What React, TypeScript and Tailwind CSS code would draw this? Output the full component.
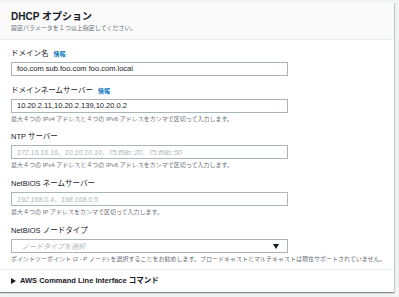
import type { JSX } from "react";

const font = "font-['Liberation_Sans','Noto_Sans_CJK_JP',sans-serif]";

function Label({ text, info }: { text: string; info?: boolean }): JSX.Element {
  return (
    <div className="flex items-center h-[10px] gap-[5px]">
      <span className="text-[7.5px] leading-[10px] text-[#16191f]">{text}</span>
      {info && (
        <span className="text-[6px] leading-[10px] font-bold text-[#0073bb]">情報</span>
      )}
    </div>
  );
}

function Input({ value, placeholder }: { value?: string; placeholder?: string }): JSX.Element {
  return (
    <div className="mt-[3px] w-[277px] h-[14px] border border-[#aab7b8] bg-white flex items-center px-[5px]">
      {value ? (
        <span className="text-[7.5px] leading-none text-[#16191f]">{value}</span>
      ) : (
        <span className="text-[7px] leading-none italic text-[#aab7b8]">{placeholder}</span>
      )}
    </div>
  );
}

function Help({ text }: { text: string }): JSX.Element {
  return <p className="mt-[2px] text-[6px] leading-[9px] text-[#687078] whitespace-nowrap">{text}</p>;
}

export default function App(): JSX.Element {
  return (
    <div className={`${font} w-[399px] h-[297px] bg-[#f2f3f3] pt-[2px] overflow-hidden`}>
      <div className="w-[394px] h-[290px] bg-white shadow-[0_1px_1px_0_rgba(0,28,36,0.3),1px_1px_1px_0_rgba(0,28,36,0.15),-1px_1px_1px_0_rgba(0,28,36,0.15)] flex flex-col">
        <div className="h-[38px] bg-[#fafafa] border-b border-[#eaeded] px-[11px] pt-[8px]">
          <h2 className="text-[10px] leading-[13px] font-bold text-[#16191f]">DHCP オプション</h2>
          <p className="text-[6px] leading-[9px] text-[#687078] mt-[1px]">設定パラメータを１つ以上指定してください。</p>
        </div>
        <div className="px-[11px] pt-[9px] flex-1 border-b border-[#eaeded]">
          <Label text="ドメイン名" info />
          <Input value="foo.com sub.foo.com foo.com.local" />

          <div className="mt-[10px]">
            <Label text="ドメインネームサーバー" info />
            <Input value="10.20.2.11,10.20.2.139,10.20.0.2" />
            <Help text="最大４つの IPv4 アドレスと４つの IPv6 アドレスをカンマで区切って入力します。" />
          </div>

          <div className="mt-[8px]">
            <Label text="NTP サーバー" />
            <Input placeholder="172.16.16.16、10.10.10.10、75:ff9b::20、75:ff9b::50" />
            <Help text="最大４つの IPv4 アドレスと４つの IPv6 アドレスをカンマで区切って入力します。" />
          </div>

          <div className="mt-[9px]">
            <Label text="NetBIOS ネームサーバー" />
            <Input placeholder="192.168.0.4、198.168.0.5" />
            <Help text="最大４つの IP アドレスをカンマで区切って入力します。" />
          </div>

          <div className="mt-[9px]">
            <Label text="NetBIOS ノードタイプ" />
            <div className="mt-[3px] w-[277px] h-[14px] border border-[#aab7b8] bg-white flex items-center justify-between pl-[10px] pr-[8px]">
              <span className="text-[7px] leading-none italic text-[#aab7b8]">ノードタイプを選択</span>
              <svg width="6" height="5" viewBox="0 0 6 5">
                <path d="M0 0h6L3 5z" fill="#16191f" />
              </svg>
            </div>
            <Help text="ポイントツーポイント (2 - P ノード) を選択することをお勧めします。ブロードキャストとマルチキャストは現在サポートされていません。" />
          </div>
        </div>
        <div className="h-[22px] px-[11px] flex items-center gap-[4px]">
          <svg width="5" height="6" viewBox="0 0 5 6">
            <path d="M0 0l5 3-5 3z" fill="#16191f" />
          </svg>
          <span className="text-[7.5px] font-bold text-[#16191f]">AWS Command Line Interface コマンド</span>
        </div>
      </div>
    </div>
  );
}
